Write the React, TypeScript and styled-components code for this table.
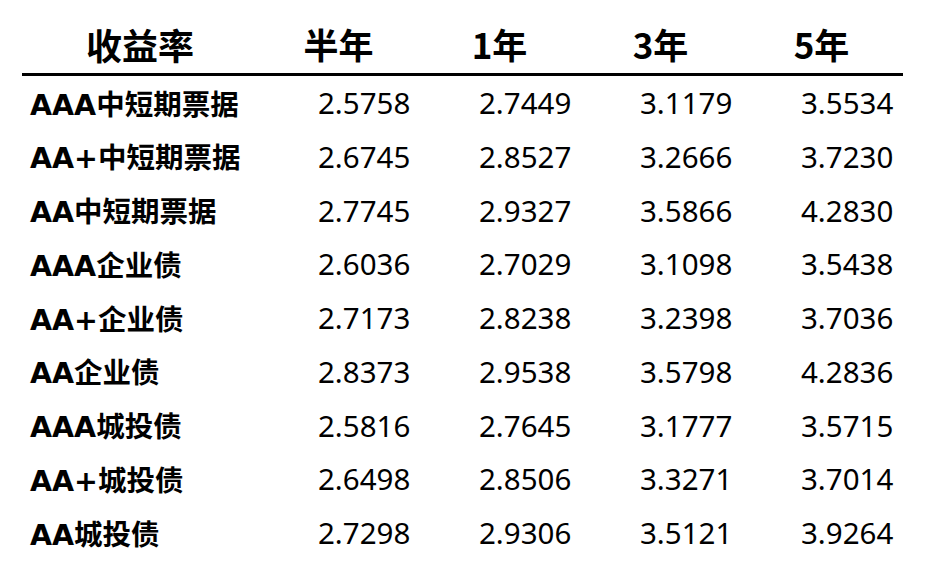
import React from "react";
import styled, { createGlobalStyle } from "styled-components";

const GlobalStyle = createGlobalStyle`
  html, body {
    margin: 0;
    padding: 0;
    background: #ffffff;
  }
`;

interface Row {
  readonly label: string;
  readonly values: string[];
}

const headers = ["半年", "1年", "3年", "5年"];

const rows: Row[] = [
  { label: "AAA中短期票据", values: ["2.5758", "2.7449", "3.1179", "3.5534"] },
  { label: "AA+中短期票据", values: ["2.6745", "2.8527", "3.2666", "3.7230"] },
  { label: "AA中短期票据", values: ["2.7745", "2.9327", "3.5866", "4.2830"] },
  { label: "AAA企业债", values: ["2.6036", "2.7029", "3.1098", "3.5438"] },
  { label: "AA+企业债", values: ["2.7173", "2.8238", "3.2398", "3.7036"] },
  { label: "AA企业债", values: ["2.8373", "2.9538", "3.5798", "4.2836"] },
  { label: "AAA城投债", values: ["2.5816", "2.7645", "3.1777", "3.5715"] },
  { label: "AA+城投债", values: ["2.6498", "2.8506", "3.3271", "3.7014"] },
  { label: "AA城投债", values: ["2.7298", "2.9306", "3.5121", "3.9264"] },
];

export default function App() {
  return (
    <>
      <GlobalStyle />
      <Page>
        <Table>
          <HeaderRow>
            <TitleCell>收益率</TitleCell>
            {headers.map(h => (
              <HeadCell key={h}>{h}</HeadCell>
            ))}
          </HeaderRow>
          {rows.map(row => (
            <BodyRow key={row.label}>
              <LabelCell>{row.label}</LabelCell>
              {row.values.map((v, i) => (
                <ValueCell key={i}>{v}</ValueCell>
              ))}
            </BodyRow>
          ))}
        </Table>
      </Page>
    </>
  );
}

const Page = styled.div`
  width: 925px;
  height: 587px;
  padding: 0 22px;
  box-sizing: border-box;
  background: #ffffff;
  color: #000000;
`;

const Table = styled.div`
  width: 881px;
`;

const columns = `278px 161px 161px 161px 120px`;

const HeaderRow = styled.div`
  display: grid;
  grid-template-columns: ${columns};
  align-items: center;
  height: 73px;
  border-bottom: 3px solid #000000;
  box-sizing: content-box;
  font-family: "Noto Sans CJK SC", sans-serif;
  font-weight: 700;
  font-size: 35px;
  line-height: 1;
`;

const TitleCell = styled.div`
  padding-left: 64px;
  padding-top: 14px;
  font-size: 36px;
`;

const HeadCell = styled.div`
  width: 77px;
  text-align: center;
  padding-top: 14px;
`;

const BodyRow = styled.div`
  display: grid;
  grid-template-columns: ${columns};
  align-items: center;
  height: 53.75px;
`;

const LabelCell = styled.div`
  padding-left: 8px;
  padding-top: 6px;
  font-family: "DejaVu Sans", "Noto Sans CJK SC", sans-serif;
  font-weight: 700;
  font-size: 28.5px;
  line-height: 1;
  white-space: nowrap;
`;

const ValueCell = styled.div`
  padding-left: 18px;
  font-family: "Noto Sans", "Open Sans", sans-serif;
  font-weight: 400;
  font-size: 29.5px;
  line-height: 1;
`;
